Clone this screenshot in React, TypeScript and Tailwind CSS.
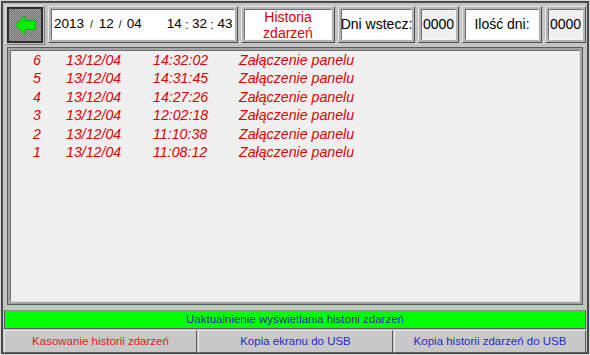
import React from "react"

const events = [
  { nr: 6, date: "13/12/04", time: "14:32:02", text: "Załączenie panelu" },
  { nr: 5, date: "13/12/04", time: "14:31:45", text: "Załączenie panelu" },
  { nr: 4, date: "13/12/04", time: "14:27:26", text: "Załączenie panelu" },
  { nr: 3, date: "13/12/04", time: "12:02:18", text: "Załączenie panelu" },
  { nr: 2, date: "13/12/04", time: "11:10:38", text: "Załączenie panelu" },
  { nr: 1, date: "13/12/04", time: "11:08:12", text: "Załączenie panelu" },
]

function Frame({ className, inner, children }: { className: string; inner: string; children: React.ReactNode }) {
  return (
    <div className={"h-[37px] border border-t-[#e8e8e8] border-l-[#e8e8e8] border-r-[#505050] border-b-[#505050] bg-[#b4b4b4] p-[2px] " + className}>
      <div className={"h-full border border-t-[#707070] border-l-[#707070] border-r-[#f4f4f4] border-b-[#f4f4f4] flex items-center justify-center " + inner}>
        {children}
      </div>
    </div>
  )
}

export default function App() {
  return (
    <div className="w-[590px] h-[355px] bg-[#d4d4d4] p-[1px] font-['Liberation_Sans',Arial,sans-serif]">
      <div className="h-full border-2 border-[#4a4a4a] bg-[#c4c4c4] flex flex-col">
        {/* Pasek górny */}
        <div className="h-[43px] flex items-center pl-[2px] gap-[3px] shrink-0">
          <div className="w-[40px] h-[40px] bg-[#c0c0c0] border border-[#e0e0e0] border-r-[#808080] border-b-[#808080] p-[1px]">
            <div className="h-full border-2 border-[#2e2e2e] bg-[image:repeating-conic-gradient(#747474_0_25%,#a0a0a0_0_50%)] bg-[length:2px_2px] flex items-center justify-center">
              <svg width="21" height="20" viewBox="0 0 21 20">
                <polygon points="0.5,10 10,0.8 10,5.5 20.5,5.5 20.5,14.5 10,14.5 10,19.2" fill="#00f000" stroke="#00b000" strokeWidth="0.8" />
              </svg>
            </div>
          </div>

          <Frame className="w-[190px]" inner="bg-white justify-start pl-[2px] text-[13.5px] text-black whitespace-nowrap">
            <span>2013</span>
            <span className="text-[10px] mx-[6px]">/</span>
            <span>12</span>
            <span className="text-[10px] mx-[5px]">/</span>
            <span>04</span>
            <span className="ml-[25px]">14</span>
            <span className="text-[12px] mx-[3.5px]">:</span>
            <span>32</span>
            <span className="text-[12px] mx-[3.5px]">:</span>
            <span>43</span>
          </Frame>

          <Frame className="w-[94px]" inner="bg-white text-[14px] leading-[16px] text-[#e00000] text-center">
            <span>Historia<br />zdarzeń</span>
          </Frame>

          <Frame className="w-[77px]" inner="bg-white text-[14px] text-black whitespace-nowrap">
            Dni wstecz:
          </Frame>

          <Frame className="w-[41px]" inner="bg-[#f0f0f0] text-[14px] text-black">
            0000
          </Frame>

          <Frame className="w-[80px]" inner="bg-white text-[14px] text-black whitespace-nowrap">
            Ilość dni:
          </Frame>

          <Frame className="w-[41px]" inner="bg-[#f0f0f0] text-[14px] text-black">
            0000
          </Frame>
        </div>

        {/* Lista zdarzeń */}
        <div className="mx-[4px] mt-[1px] h-[258px] border border-[#5a5a5a] bg-[#a4a4a4] p-[2px] shrink-0">
          <div className="h-full bg-[#f0f0f0] border border-t-[#707070] border-l-[#707070] border-r-[#e0e0e0] border-b-[#e0e0e0]">
            {events.map((e) => (
              <div key={e.nr} className="grid grid-cols-[30px_112px_86px_1fr] text-[14.2px] leading-[18.4px] italic text-[#e00000]">
                <span className="text-right">{e.nr}</span>
                <span className="pl-[25px]">{e.date}</span>
                <span>{e.time}</span>
                <span>{e.text}</span>
              </div>
            ))}
          </div>
        </div>

        {/* Pasek zielony */}
        <div className="mx-[1px] mt-[5px] h-[19px] bg-[#00ff00] border border-[#5a5a5a] border-t-[#909090] flex items-center justify-center text-[11.5px] text-[#2828a8] shrink-0">
          Uaktualnienie wyświetlania historii zdarzeń
        </div>

        {/* Przyciski */}
        <div className="mx-[1px] mt-[1px] h-[23px] flex gap-[1px] text-[11.5px] shrink-0">
          <button className="w-[193px] bg-[#c8c8c8] border border-[#5a5a5a] border-t-[#e8e8e8] border-l-[#e8e8e8] text-[#e02020]">
            Kasowanie historii zdarzeń
          </button>
          <button className="w-[195px] bg-[#c8c8c8] border border-[#5a5a5a] border-t-[#e8e8e8] border-l-[#e8e8e8] text-[#2828c8]">
            Kopia ekranu do USB
          </button>
          <button className="flex-1 bg-[#c8c8c8] border border-[#5a5a5a] border-t-[#e8e8e8] border-l-[#e8e8e8] text-[#2828c8]">
            Kopia historii zdarzeń do USB
          </button>
        </div>
      </div>
    </div>
  )
}
